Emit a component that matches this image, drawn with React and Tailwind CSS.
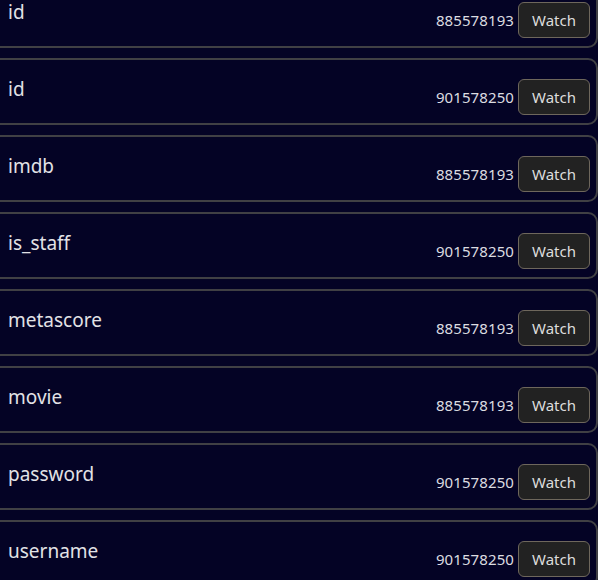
import React from 'react'

const rows = [
  { name: 'id', value: '885578193' },
  { name: 'id', value: '901578250' },
  { name: 'imdb', value: '885578193' },
  { name: 'is_staff', value: '901578250' },
  { name: 'metascore', value: '885578193' },
  { name: 'movie', value: '885578193' },
  { name: 'password', value: '901578250' },
  { name: 'username', value: '901578250' },
]

const Row = ({ name, value }) => (
  <div className="flex justify-between h-[67px] -ml-[10px] border-2 border-[#404044] rounded-r-[10px] bg-[#040325]">
    <div className="pl-[16px] pt-[15px] text-[19px] text-[#e2e2e6]">{name}</div>
    <div className="flex items-center gap-[4px] pt-[19px] pr-[6px] self-start">
      <span className="text-[15px] tracking-[0.1px] text-[#dcdce0]">{value}</span>
      <button className="h-[36px] w-[72px] rounded-md border border-[#6e675c] bg-[#222222] text-[15px] text-[#dddddd]">
        Watch
      </button>
    </div>
  </div>
)

export default function App() {
  return (
    <div className="w-[598px] h-[580px] overflow-hidden bg-[#040325]" style={{ fontFamily: '"Noto Sans", sans-serif' }}>
      <div className="flex flex-col gap-[10px] -mt-[19px]">
        {rows.map((r, i) => (
          <Row key={i} name={r.name} value={r.value} />
        ))}
      </div>
    </div>
  )
}
